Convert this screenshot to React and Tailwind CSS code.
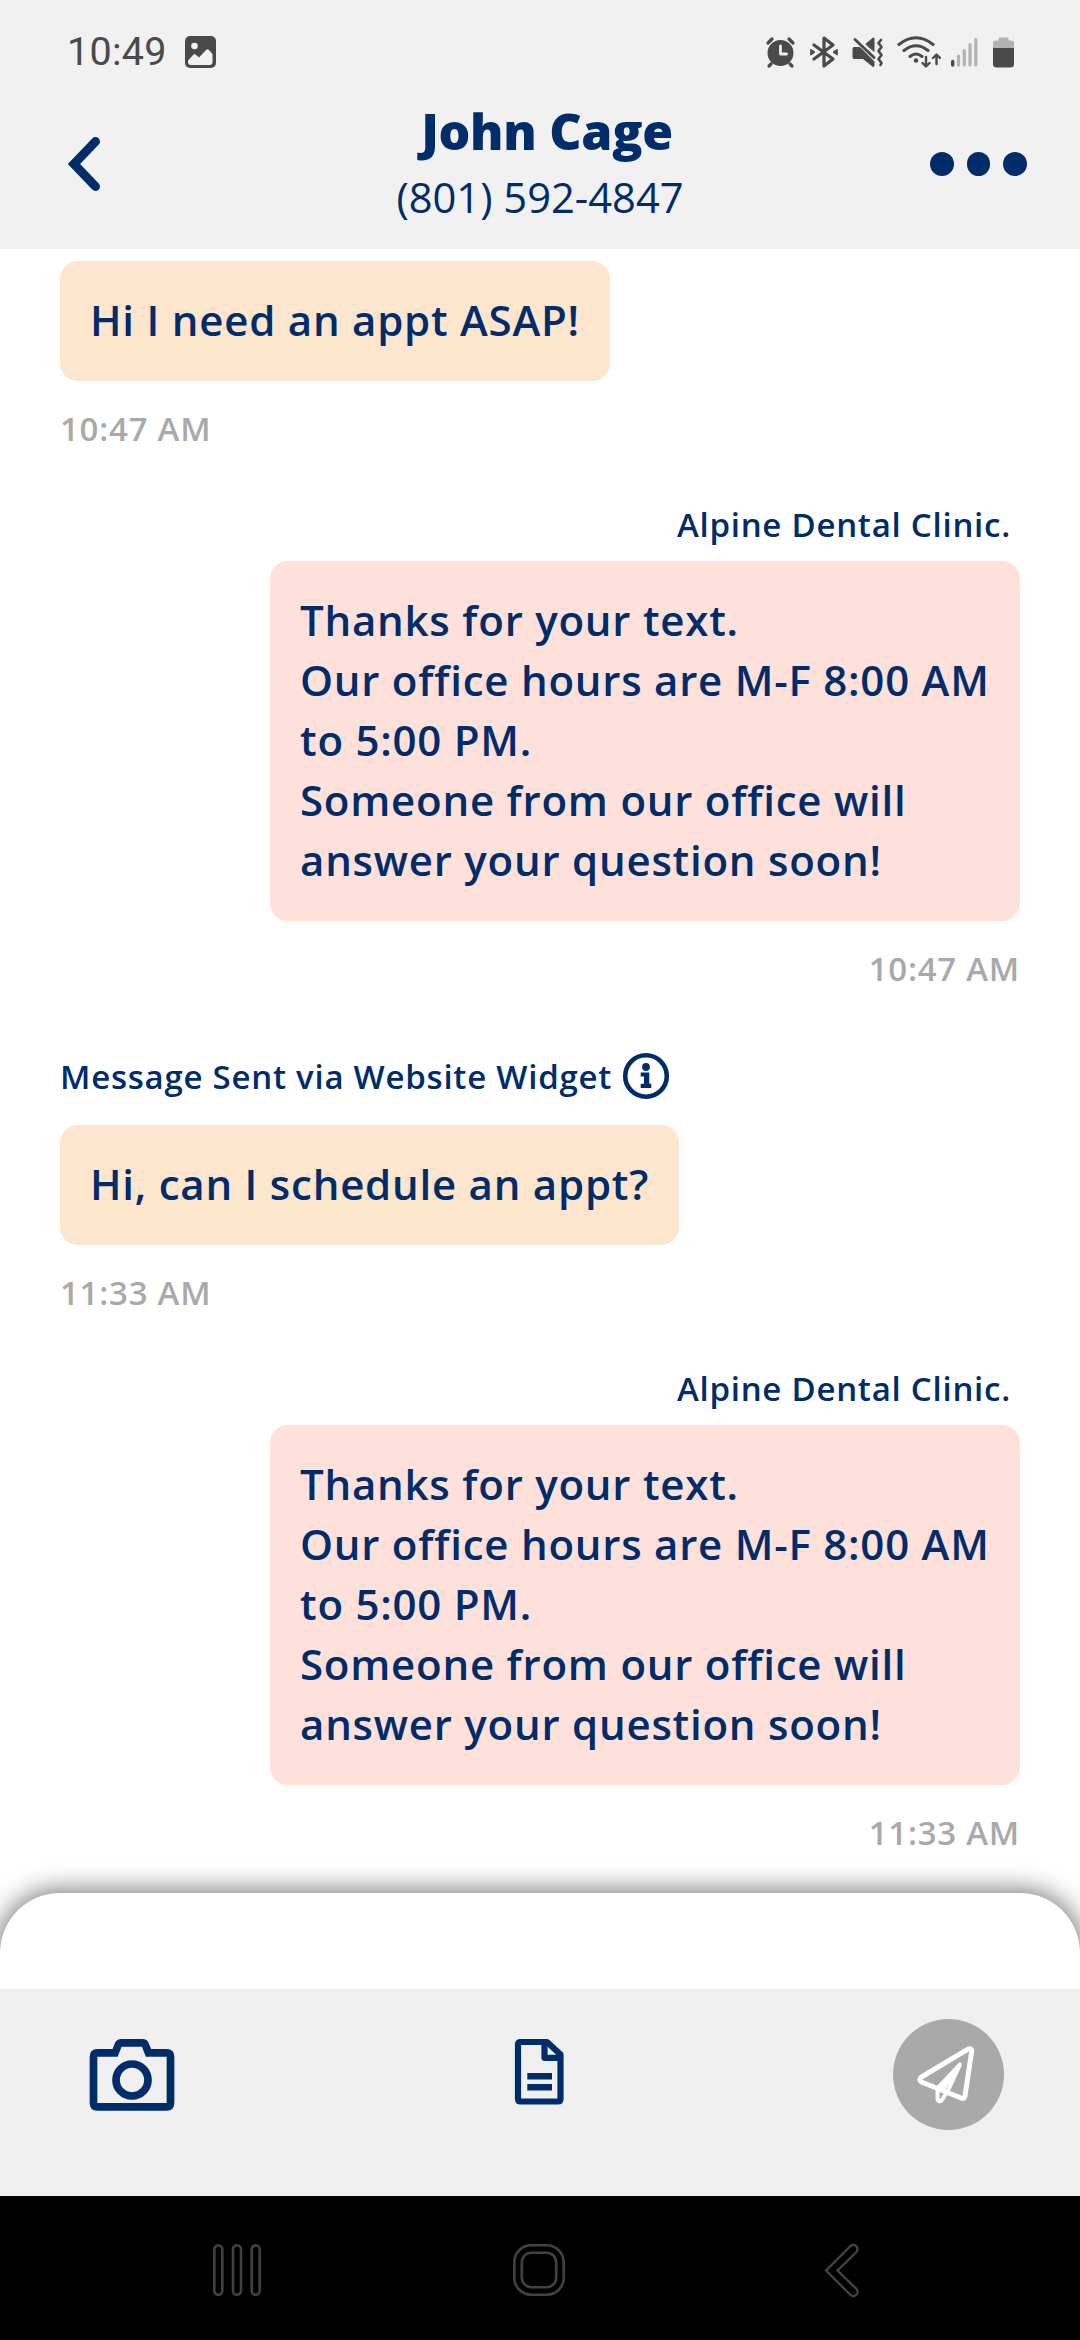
import React from 'react';

const messages = [
    { id: 1, from: 'patient', text: 'Hi I need an appt ASAP!', time: '10:47 AM' },
    {
        id: 2,
        from: 'clinic',
        label: 'Alpine Dental Clinic.',
        text: 'Thanks for your text.\nOur office hours are M-F 8:00 AM\nto 5:00 PM.\nSomeone from our office will\nanswer your question soon!',
        time: '10:47 AM',
    },
    { id: 3, from: 'patient', label: 'Message Sent via Website Widget', info: true, text: 'Hi, can I schedule an appt?', time: '11:33 AM' },
    {
        id: 4,
        from: 'clinic',
        label: 'Alpine Dental Clinic.',
        text: 'Thanks for your text.\nOur office hours are M-F 8:00 AM\nto 5:00 PM.\nSomeone from our office will\nanswer your question soon!',
        time: '11:33 AM',
    },
];

const StatusIcons = () => (
    <svg width="250" height="34" viewBox="0 0 250 34" fill="none" stroke="#4a4a4a" strokeLinecap="round" strokeLinejoin="round">
        {/* Alarm */}
        <circle cx="15.500" cy="18" r="13" fill="#4a4a4a" stroke="none" />
        <path d="M3 8l4-4M28 8l-4-4M6 29l-2 2M25 29l2 2" strokeWidth="3.200" />
        <path d="M15.500 11v8h6" stroke="#f1f1f1" strokeWidth="2.800" />

        {/* Bluetooth */}
        <path d="M49 10l19 14-9 7V3l9 7-19 14" strokeWidth="3.200" />
        <path d="M46 14.500l4 2.700-4 2.700zM72 14.500l-4 2.700 4 2.700z" fill="#4a4a4a" strokeWidth="1" />

        {/* Mute / vibrate */}
        <path d="M89 12.500h6l14 14V31l-1 .5-10-8h-9q-1 0-1-1v-8.500q0-1.500 1-1.500zM101 9l7-6h1v13z" fill="#4a4a4a" strokeWidth="1" />
        <path d="M90 4.500L109 22.500" strokeWidth="2.800" />
        <path d="M116 5l-2.500 3 3 4-3 4 3 4-3 4 3 4-1 2" strokeWidth="2.600" />

        {/* Wifi */}
        <path d="M134 9.500q17-13.500 34 0M139 15.500q12-9.500 24 0M145 21.500q6-5 12 0" strokeWidth="3" />
        <circle cx="151" cy="25.500" r="2.200" fill="#4a4a4a" stroke="none" />
        <path d="M161 22v9M157.500 28l3.500 3.500 3.500-3.500M171.500 29v-9M168 23l3.500-3.500 3.500 3.500" strokeWidth="2.400" />

        {/* Signal */}
        <path d="M187.700 26.500v3.500" strokeWidth="3.400" />
        <path d="M193.500 21v9M199.300 15.500v14.500M205 9.500V30M210.800 4.500V30" stroke="#b3b3b3" strokeWidth="3.200" />

        {/* Battery */}
        <path d="M228 13V8q0-2.500 3-2.500h2.500V4q0-1.500 1.500-1.500h7q1.500 0 1.500 1.500v1.500h2.500q3 0 3 2.500v5z" fill="#b3b3b3" stroke="none" />
        <path d="M228 13h21v16q0 3.500-3.500 3.500h-14q-3.500 0-3.500-3.500z" fill="#4a4a4a" stroke="none" />
    </svg>
);

const Header = () => (
    <header className="h-[249px] bg-[#f1f1f1]">
        <div className="flex h-[100px] items-center justify-between pl-[67px] pr-[65px] pt-1">
            <div className="flex items-center gap-[18px]">
                <span className="font-['Roboto',sans-serif] text-[39.5px] leading-none tracking-[0.3px] text-[#4a4a4a]">10:49</span>
                <svg width="31" height="32" viewBox="0 0 31 32">
                    <rect width="31" height="32" rx="5" fill="#4a4a4a" />
                    <circle cx="9.500" cy="10" r="3.300" fill="#f1f1f1" />
                    <path d="M3 24.500l5.500-6q1-1 2 0l3.500 3 7-7.500q1.500-1.500 3 0l3.500 4v8q0 3-3 3H6q-3 0-3-3z" fill="#f1f1f1" />
                </svg>
            </div>
            <StatusIcons />
        </div>
        <div className="grid grid-cols-[160px_1fr_160px]">
            <svg className="ml-[67px] mt-[36px]" width="34" height="56" viewBox="0 0 34 56" fill="none">
                <path d="M28.500 5.500L7 28l21.500 22.500" stroke="#002c69" strokeWidth="9" strokeLinecap="round" />
            </svg>
            <div className="-mt-px flex flex-col items-center">
                <h1 className="ml-[14px] text-[50px] font-extrabold leading-[64px] tracking-[-0.3px]">John Cage</h1>
                <p className="text-[41.7px] leading-[67px]">(801) 592-4847</p>
            </div>
            <div className="ml-[10px] mt-[52px] flex gap-[13px]">
                <span className="h-[23.500px] w-[23.500px] rounded-full bg-[#002c69]"></span>
                <span className="h-[23.500px] w-[23.500px] rounded-full bg-[#002c69]"></span>
                <span className="h-[23.500px] w-[23.500px] rounded-full bg-[#002c69]"></span>
            </div>
        </div>
    </header>
);

const InfoIcon = () => (
    <svg className="-mt-[2px] ml-[10px]" width="48" height="48" viewBox="0 0 48 48">
        <circle cx="24" cy="24" r="20.800" fill="none" stroke="#002c69" strokeWidth="4.600" />
        <circle cx="24" cy="15" r="3.900" fill="#002c69" />
        <path d="M18.700 20.500h8.600v11.300h2V36H18.700v-4.200H22v-7.200h-3.300z" fill="#002c69" />
    </svg>
);

const Message = ({ message }) => {
    const isClinic = message.from === 'clinic';

    return (
        <div className={isClinic ? 'flex flex-col items-end' : 'flex flex-col items-start'}>
            {message.label && (
                <div className={isClinic ? 'flex h-[72px] items-center pr-[9px]' : 'flex h-[96px] items-center'}>
                    <span className="text-[33px] font-semibold leading-[48px] tracking-[0.75px]">{message.label}</span>
                    {message.info && <InfoIcon />}
                </div>
            )}
            <div
                className={
                    isClinic
                        ? 'w-[750px] whitespace-pre rounded-[18px] bg-[#fee1db] px-[30px] pt-[29px] pb-[31px] text-[42px] font-semibold leading-[60px] tracking-[0.77px]'
                        : 'whitespace-pre rounded-[18px] bg-[#fee5cd] px-[30px] pt-[29px] pb-[31px] text-[42px] font-semibold leading-[60px] tracking-[0.77px]'
                }
            >
                {message.text}
            </div>
            <p className="mt-[24px] text-[33px] font-semibold leading-[48px] tracking-[0.75px] text-[#a9a9a9]">{message.time}</p>
        </div>
    );
};

const Toolbar = () => (
    <div className="grid h-[207px] grid-cols-3 items-start bg-[#f0f0f0] px-[76px] pt-[30px]">
        <svg className="ml-[13px] mt-[19px]" width="86" height="74" viewBox="0 0 86 74" fill="none" stroke="#002c69" strokeWidth="7.700">
            <path d="M8.500 14.900H26l3.300-8q.9-2 3-2h21q2.200 0 3 2l3.200 8H77.500q4 0 4 4V65q0 3.900-4 3.900h-69q-4 0-4-3.900V18.900q0-4 4-4z" />
            <circle cx="43" cy="42" r="16" />
        </svg>
        <svg className="mr-[2px] mt-[19px] justify-self-center" width="50" height="68" viewBox="0 0 50 68" fill="none" stroke="#002c69" strokeWidth="6.200" strokeLinejoin="round">
            <path d="M6.500 4H33l13.500 12.500v44.500q0 2.500-2.500 2.500H6.500Q4 63.500 4 61V6.500Q4 4 6.500 4z" />
            <path d="M30.500 4v15.800h16" />
            <path d="M13.300 38.300h24.700M13.300 49.200h24.700" strokeWidth="6.500" strokeLinecap="butt" />
        </svg>
        <div className="flex h-[111px] w-[111px] items-center justify-center justify-self-end rounded-full bg-[#a9a9a9]">
            <svg className="mr-[5px]" width="58" height="58" viewBox="0 0 58 58" fill="none" stroke="#fff" strokeWidth="5" strokeLinejoin="round" strokeLinecap="round">
                <path d="M51 3.200q3.500-1.500 3.700 1.800L48 50q-.7 3.500-4 2L4.500 36q-3.500-2 0-5z" />
                <path d="M43 18.500L20.500 42.500v10.500q.8 3.500 4 1.500l6-9z" strokeWidth="4" />
                <path d="M42 19L21 41l6 2z" fill="#fff" strokeWidth="3" />
            </svg>
        </div>
    </div>
);

const NavBar = () => (
    <nav className="grid h-[144px] grid-cols-3 items-start bg-black px-[212px] pt-[47px]">
        <svg width="50" height="54" viewBox="0 0 50 54" fill="none" stroke="#424242" strokeWidth="2.600">
            <rect x="2.300" y="2.300" width="8" height="49.400" rx="4" />
            <rect x="21" y="2.300" width="8" height="49.400" rx="4" />
            <rect x="39.700" y="2.300" width="8" height="49.400" rx="4" />
        </svg>
        <svg className="mr-[2px] justify-self-center" width="54" height="54" viewBox="0 0 54 54" fill="none" stroke="#424242" strokeWidth="2.600">
            <rect x="2.300" y="2.300" width="49.400" height="49.400" rx="17" />
            <rect x="9.800" y="9.800" width="34.400" height="34.400" rx="9.500" />
        </svg>
        <svg className="mr-[8px] justify-self-end" width="36" height="56" viewBox="0 0 36 56" fill="none" stroke="#424242" strokeWidth="2.400">
            <path d="M2 27.500L26 3.500a4.200 4.200 0 0 1 6.500 5.500L13.500 27.500 32.500 46a4.200 4.200 0 0 1-6.500 5.500z" />
        </svg>
    </nav>
);

const App = () => {
    return (
        <div className="flex h-[2340px] w-[1080px] flex-col overflow-hidden bg-white font-['Open_Sans',sans-serif] text-[#002c69]">
            <Header />
            <main className="flex h-[1644px] flex-col gap-[36px] px-[60px] pt-[12px]">
                {messages.map((message) => (
                    <Message key={message.id} message={message} />
                ))}
            </main>
            <div className="h-[96px] rounded-t-[60px] bg-white shadow-[0_0_24px_4px_rgba(0,0,0,0.5)]"></div>
            <div className="relative">
                <Toolbar />
                <NavBar />
            </div>
        </div>
    );
};

export default App;
